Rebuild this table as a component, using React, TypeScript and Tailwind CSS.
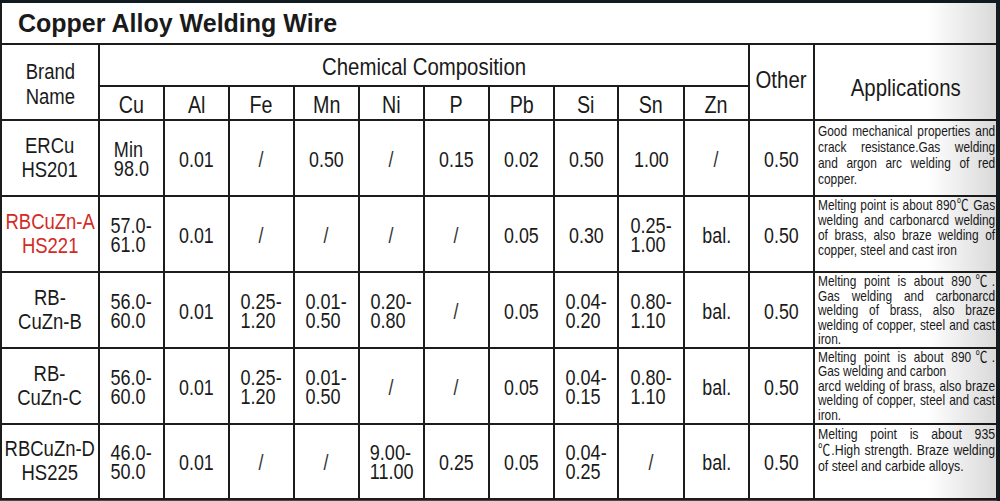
import React from 'react';

const sans = "font-['Liberation_Sans',Arial,'Noto_Sans_CJK_SC',sans-serif]";

// one entry per printed line; j = justified across the cell
type Line = { t: string; j?: boolean };

type Row = {
  brand: string[];
  red?: boolean;
  values: string[][];
  app: Line[];
  size: string;
};

const deg = '\u2103';

const rows: Row[] = [
  {
    brand: ['ERCu', 'HS201'],
    values: [['Min', '98.0'], ['0.01'], ['/'], ['0.50'], ['/'], ['0.15'], ['0.02'], ['0.50'], ['1.00'], ['/'], ['0.50']],
    app: [
      { t: 'Good mechanical properties and', j: true },
      { t: 'crack resistance.Gas welding', j: true },
      { t: 'and argon arc welding of red', j: true },
      { t: 'copper.' },
    ],
    size: 'text-[14.5px] leading-[16px] pt-[2px]',
  },
  {
    brand: ['RBCuZn-A', 'HS221'],
    red: true,
    values: [['57.0-', '61.0'], ['0.01'], ['/'], ['/'], ['/'], ['/'], ['0.05'], ['0.30'], ['0.25-', '1.00'], ['bal.'], ['0.50']],
    app: [
      { t: `Melting point is about 890${deg} Gas`, j: true },
      { t: 'welding and carbonarcd welding', j: true },
      { t: 'of brass, also braze welding of', j: true },
      { t: 'copper, steel and cast iron' },
    ],
    size: 'text-[14.5px] leading-[15px] pt-[1px]',
  },
  {
    brand: ['RB-', 'CuZn-B'],
    values: [['56.0-', '60.0'], ['0.01'], ['0.25-', '1.20'], ['0.01-', '0.50'], ['0.20-', '0.80'], ['/'], ['0.05'], ['0.04-', '0.20'], ['0.80-', '1.10'], ['bal.'], ['0.50']],
    app: [
      { t: `Melting point is about 890${deg}.`, j: true },
      { t: 'Gas welding and carbonarcd', j: true },
      { t: 'welding of brass, also braze', j: true },
      { t: 'welding of copper, steel and cast', j: true },
      { t: 'iron.' },
    ],
    size: 'text-[14.5px] leading-[14.5px] pt-[1px]',
  },
  {
    brand: ['RB-', 'CuZn-C'],
    values: [['56.0-', '60.0'], ['0.01'], ['0.25-', '1.20'], ['0.01-', '0.50'], ['/'], ['/'], ['0.05'], ['0.04-', '0.15'], ['0.80-', '1.10'], ['bal.'], ['0.50']],
    app: [
      { t: `Melting point is about 890${deg}.`, j: true },
      { t: 'Gas welding and carbon' },
      { t: 'arcd welding of brass, also braze', j: true },
      { t: 'welding of copper, steel and cast', j: true },
      { t: 'iron.' },
    ],
    size: 'text-[14.5px] leading-[14.5px] pt-[1px]',
  },
  {
    brand: ['RBCuZn-D', 'HS225'],
    values: [['46.0-', '50.0'], ['0.01'], ['/'], ['/'], ['9.00-', '11.00'], ['0.25'], ['0.05'], ['0.04-', '0.25'], ['/'], ['bal.'], ['0.50']],
    app: [
      { t: 'Melting point is about 935', j: true },
      { t: `${deg}.High strength. Braze welding`, j: true },
      { t: 'of steel and carbide alloys.' },
    ],
    size: 'text-[15px] leading-[16px] pt-[1px]',
  },
];

const elements = ['Cu', 'Al', 'Fe', 'Mn', 'Ni', 'P', 'Pb', 'Si', 'Sn', 'Zn'];
const widths = [98, 65, 65, 65, 65, 65, 65, 65, 64, 66, 65, 65, 183];
const heights = ['h-[76px]', 'h-[76px]', 'h-[75px]', 'h-[76px]', 'h-[75px]'];

const cell = 'border-2 border-[#1c1c1c] text-center align-middle whitespace-nowrap p-0';

// narrow glyphs, like the condensed face of the original sheet
function Squeeze({ children, className = 'scale-x-[0.82]' }: { children: React.ReactNode; className?: string }) {
  return (
    <div className="flex justify-center">
      <span className={`inline-block ${className}`}>{children}</span>
    </div>
  );
}

function Value({ lines }: { lines: string[] }) {
  if (lines.length === 1) {
    return (
      <Squeeze className={`scale-x-[0.81] translate-y-[2px] ${lines[0] === '/' ? 'text-[#333]' : ''}`}>{lines[0]}</Squeeze>
    );
  }
  return (
    <Squeeze className="scale-x-[0.82] text-left leading-[19px] translate-y-[1px]">
      {lines[0]}
      <br />
      {lines[1]}
    </Squeeze>
  );
}

export default function App() {
  return (
    <div className="w-[1000px] h-[501px] bg-[#0f1a21] pt-[3px] overflow-hidden">
      <div className="relative w-[997px] bg-white">
        <table className={`table-fixed border-collapse w-[997px] text-[#1a1a1a] ${sans}`}>
          <colgroup>
            {widths.map((w, i) => (
              <col key={i} style={{ width: w }} />
            ))}
          </colgroup>
          <tbody>
            <tr>
              <td
                colSpan={13}
                className="border-2 border-t-0 border-[#1c1c1c] h-[41px] pl-[16px] text-left align-middle font-bold text-[25px] leading-none"
              >
                Copper Alloy Welding Wire
              </td>
            </tr>
            <tr>
              <td rowSpan={2} className={`${cell} text-[22px] leading-[25px] pt-[4px]`}>
                <Squeeze className="scale-x-[0.84]">
                  Brand
                  <br />
                  Name
                </Squeeze>
              </td>
              <td colSpan={10} className={`${cell} h-[42px] text-[24px] leading-none pt-[3px]`}>
                <Squeeze className="scale-x-[0.85]">Chemical Composition</Squeeze>
              </td>
              <td rowSpan={2} className={`${cell} text-[24px] leading-none pb-[4px]`}>
                <Squeeze className="scale-x-[0.85]">Other</Squeeze>
              </td>
              <td rowSpan={2} className={`${cell} text-[24px] leading-none pt-[12px]`}>
                <Squeeze className="scale-x-[0.85]">Applications</Squeeze>
              </td>
            </tr>
            <tr>
              {elements.map((el) => (
                <td key={el} className={`${cell} h-[34px] text-[24px] leading-none pt-[4px]`}>
                  <Squeeze>{el}</Squeeze>
                </td>
              ))}
            </tr>
            {rows.map((r, i) => (
              <tr key={i}>
                <td className={`${cell} ${heights[i]} text-[22px] leading-[24px] ${r.red ? 'text-[#d42a26]' : ''}`}>
                  <Squeeze className="scale-x-[0.84]">
                    {r.brand[0]}
                    <br />
                    {r.brand[1]}
                  </Squeeze>
                </td>
                {r.values.map((v, j) => (
                  <td key={j} className={`${cell} text-[22px] leading-none`}>
                    <Value lines={v} />
                  </td>
                ))}
                <td className="border-2 border-[#1c1c1c] align-top p-0 pl-[3px] overflow-hidden">
                  <div className={`w-[216px] origin-left scale-x-[0.82] whitespace-nowrap ${r.size}`}>
                    {r.app.map((l, k) => (
                      <div
                        key={k}
                        className={l.j ? 'text-justify [text-align-last:justify] [text-justify:inter-word]' : 'text-left'}
                      >
                        {l.t}
                      </div>
                    ))}
                  </div>
                </td>
              </tr>
            ))}
          </tbody>
        </table>
        <div className="absolute top-0 right-0 bottom-0 w-[70px] pointer-events-none bg-gradient-to-r from-transparent to-black/15" />
      </div>
      <div className="w-[997px] h-[4px] bg-[#4a4a4a]" />
    </div>
  );
}
